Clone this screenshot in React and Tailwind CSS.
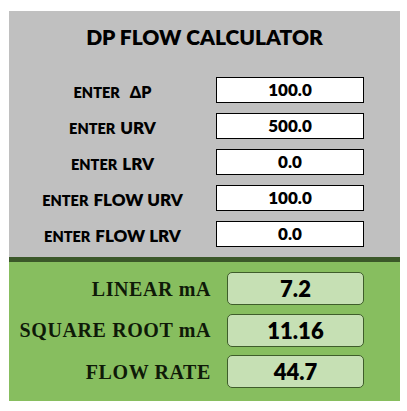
import React from "react";

const inputs = [
  { small: "ENTER", big: "ΔP", gap: "ml-[10px]", bigSize: "text-[16px]", value: "100.0" },
  { small: "ENTER", big: "URV", gap: "ml-[5px]", bigSize: "text-[17px]", value: "500.0" },
  { small: "ENTER", big: "LRV", gap: "ml-[5px]", bigSize: "text-[17px]", value: "0.0" },
  { small: "ENTER", big: "FLOW URV", gap: "ml-[5px]", bigSize: "text-[17px]", value: "100.0" },
  { small: "ENTER", big: "FLOW LRV", gap: "ml-[5px]", bigSize: "text-[17px]", value: "0.0" },
];

const results = [
  { label: "LINEAR mA", value: "7.2" },
  { label: "SQUARE ROOT mA", value: "11.16" },
  { label: "FLOW RATE", value: "44.7" },
];

function InputRow({ row }) {
  return (
    <div className="flex h-[26px] items-center">
      <div className="w-[207px] pt-[3px] text-center font-[Lato,sans-serif] font-extrabold text-black">
        <span className="text-[14.5px]">{row.small}</span>
        <span className={`${row.bigSize} ${row.gap}`}>{row.big}</span>
      </div>
      <div className="flex h-[26px] w-[148px] items-center justify-center border border-black bg-white font-[Lato,sans-serif] text-[17px] font-extrabold text-black">
        {row.value}
      </div>
    </div>
  );
}

function ResultRow({ row }) {
  return (
    <div className="flex h-[33px] items-center">
      <div className="w-[203px] pr-[1px] text-right font-['Liberation_Serif',serif] text-[20px] font-bold tracking-[0.6px] text-[#0f1a08]">
        {row.label}
      </div>
      <div className="ml-[15px] flex h-[33px] w-[137px] items-center justify-center rounded-[5px] border border-[#3f5d2b] bg-[#c6e0b4] font-[Lato,sans-serif] text-[22px] font-extrabold text-black">
        {row.value}
      </div>
    </div>
  );
}

export default function App() {
  return (
    <div className="h-[411px] w-[407px] bg-white pl-[9px] pt-[11px]">
      <div className="w-[391px]">
        <div className="flex h-[246px] flex-col bg-[#c0c0c0]">
          <div className="h-[66px] pt-[15px] text-center font-[Lato,sans-serif] text-[21px] font-extrabold leading-[21px] text-black">
            DP FLOW CALCULATOR
          </div>
          <div className="flex flex-col gap-[10px]">
            {inputs.map((row) => (
              <InputRow key={row.big} row={row} />
            ))}
          </div>
        </div>
        <div className="h-[5px] bg-[#3b5829]" />
        <div className="flex h-[139px] flex-col gap-[8.5px] bg-[#87be5f] pt-[10px]">
          {results.map((row) => (
            <ResultRow key={row.label} row={row} />
          ))}
        </div>
      </div>
    </div>
  );
}
